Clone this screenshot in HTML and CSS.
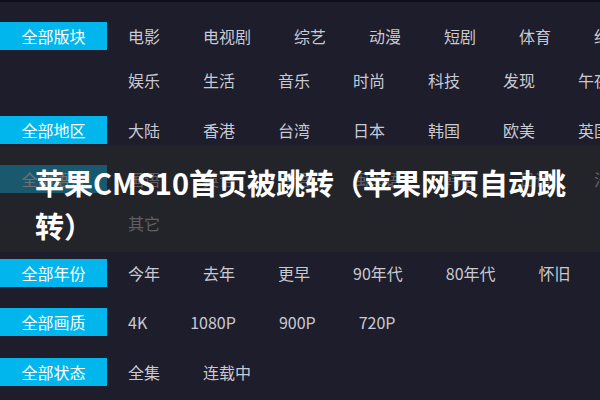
FILE: index.html
```html
<!DOCTYPE html>
<html lang="zh-CN">
<head>
<meta charset="utf-8">
<title>苹果CMS10首页被跳转</title>
<link rel="stylesheet" href="styles.css">
</head>
<body>
<div class="page">
  <div class="filters">
    <div class="group">
      <div class="label">全部版块</div>
      <ul class="items">
        <li>电影</li><li>电视剧</li><li>综艺</li><li>动漫</li><li>短剧</li><li>体育</li><li>纪录片</li>
        <li>娱乐</li><li>生活</li><li>音乐</li><li>时尚</li><li>科技</li><li>发现</li><li>午夜</li>
      </ul>
    </div>
    <div class="group">
      <div class="label">全部地区</div>
      <ul class="items">
        <li>大陆</li><li>香港</li><li>台湾</li><li>日本</li><li>韩国</li><li>欧美</li><li>英国</li>
      </ul>
    </div>
    <div class="group">
      <div class="label">全部语言</div>
      <ul class="items">
        <li>国语</li><li>英语</li><li>粤语</li><li>闽南语</li><li>韩语</li><li>日语</li><li>法语</li>
        <li>其它</li>
      </ul>
    </div>
    <div class="group">
      <div class="label">全部年份</div>
      <ul class="items">
        <li>今年</li><li>去年</li><li>更早</li><li>90年代</li><li>80年代</li><li>怀旧</li>
      </ul>
    </div>
    <div class="group">
      <div class="label">全部画质</div>
      <ul class="items">
        <li>4K</li><li>1080P</li><li>900P</li><li>720P</li>
      </ul>
    </div>
    <div class="group">
      <div class="label">全部状态</div>
      <ul class="items">
        <li>全集</li><li>连载中</li>
      </ul>
    </div>
  </div>
  <div class="banner">
    <h1 class="title">苹果CMS10首页被跳转（苹果网页自动跳<br>转）</h1>
  </div>
</div>
</body>
</html>
```

FILE: styles.css
```css
html, body {
  margin: 0;
  padding: 0;
  width: 600px;
  height: 400px;
  overflow: hidden;
}
body {
  background: #1d1d2b;
  font-family: "Noto Sans CJK SC", "Noto Sans", sans-serif;
  font-size: 16px;
  color: #c9c9d3;
}
.page {
  position: relative;
  width: 600px;
  height: 400px;
  border-top: 2px solid #0f0f19;
  box-sizing: border-box;
}
.filters {
  padding-top: 20px;
  width: 700px;
}
.group {
  display: flex;
  align-items: flex-start;
  margin-bottom: 21.5px;
}
.label {
  flex: none;
  width: 107px;
  height: 28px;
  line-height: 28px;
  margin-right: 21px;
  background: #00b6ec;
  color: #ffffff;
  text-align: center;
}
.items {
  flex: none;
  width: 560px;
  margin: 0;
  padding: 0;
  list-style: none;
  display: flex;
  flex-wrap: wrap;
  column-gap: 43px;
  row-gap: 16px;
}
.items li {
  line-height: 28px;
  height: 28px;
  white-space: nowrap;
}
.banner {
  position: absolute;
  left: 0;
  top: 144px;
  width: 600px;
  height: 106px;
  background: rgba(40, 40, 42, 0.66);
  box-sizing: border-box;
  padding: 15px 0 0 35px;
}
.title {
  margin: 0;
  font-size: 29px;
  font-weight: 700;
  line-height: 43px;
  color: #ffffff;
}
```
